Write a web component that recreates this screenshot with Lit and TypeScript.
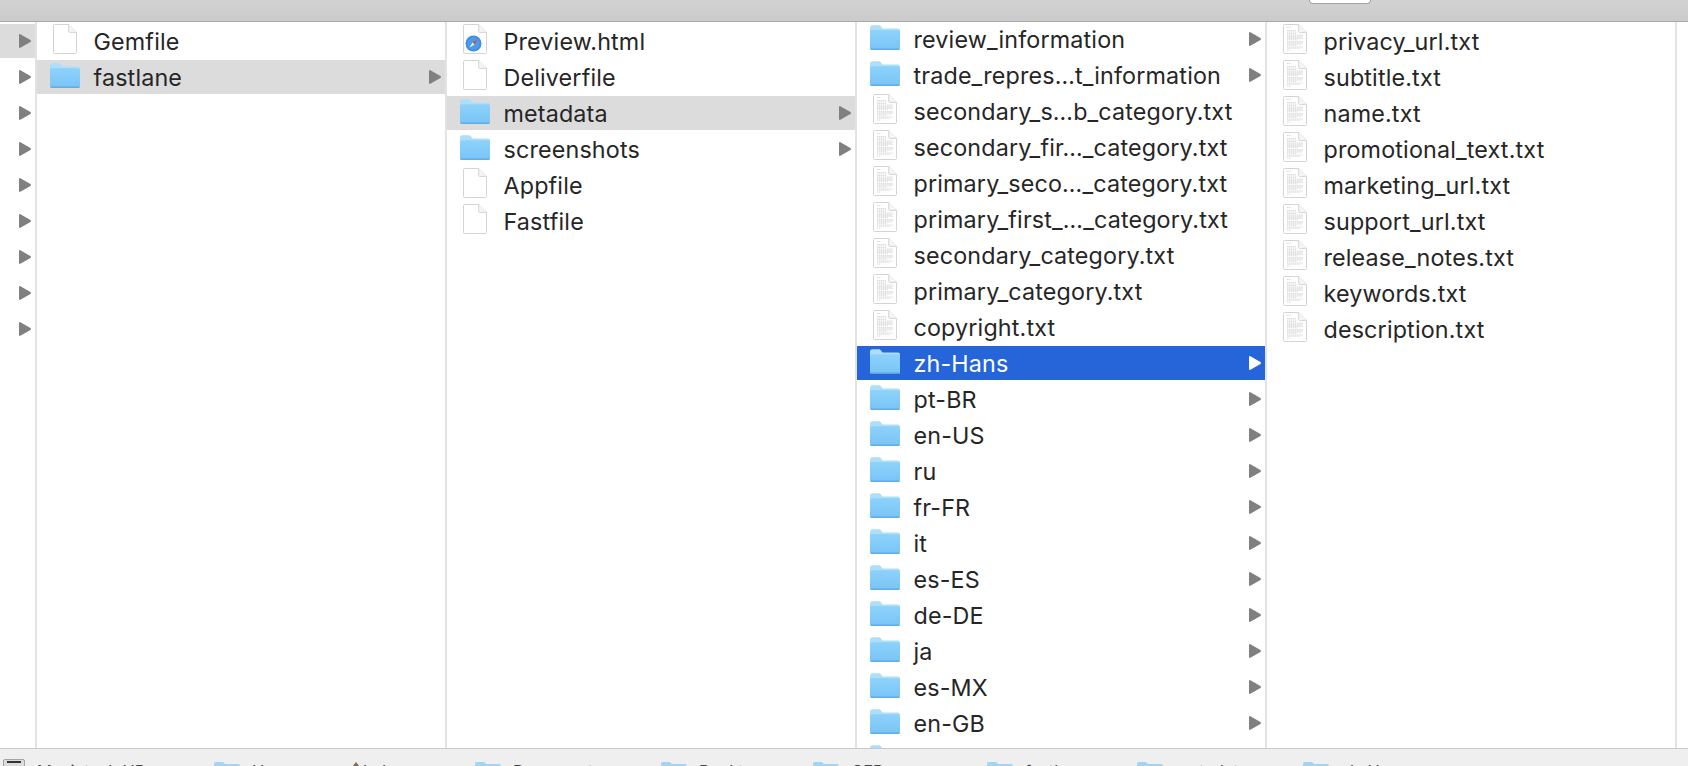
import { LitElement, html, css, svg } from "lit";
import { customElement } from "lit/decorators.js";

type Kind = "folder" | "file" | "doc" | "html";
interface Row { name: string; kind: Kind; arrow?: boolean; state?: "grey" | "blue"; }

const folderIcon = (blue = false) => html`<svg class="ic folder" width="32" height="28" viewBox="0 0 32 26" preserveAspectRatio="none">
  <defs><linearGradient id="fg" x1="0" y1="0" x2="0" y2="1"><stop offset="0" stop-color="#8ed2fa"/><stop offset="1" stop-color="#78c4f7"/></linearGradient></defs>
  <path d="M1 4.5C1 3 2 2 3.2 2h6.6c1 0 1.5.4 2.2 1.2L13.6 5H29c1.2 0 2 .8 2 2v16c0 1.2-.8 2-2 2H3c-1.2 0-2-.8-2-2z" fill="#addefb"/>
  <path d="M1 8.2c0-.9.7-1.5 1.6-1.5h26.8c.9 0 1.6.6 1.6 1.5V23c0 1.2-.8 2-2 2H3c-1.2 0-2-.8-2-2z" fill="url(#fg)"/>
  <path d="M1.5 24.3h29" stroke="${blue ? "#4f9ede" : "#5fa8dd"}" stroke-width="1.2"/>
</svg>`;

const pageOutline = svg`<path d="M1.5 2.5c0-.6.4-1 1-1h14.2L24.5 9.4V29.5c0 .6-.4 1-1 1h-21c-.6 0-1-.4-1-1z" fill="#fff" stroke="#d4d4d4"/>
  <path d="M16.7 1.5v7c0 .5.4.9.9.9h6.9" fill="#f6f6f6" stroke="#d4d4d4"/>`;

const fileIcon = () => html`<svg class="ic page" width="26" height="32" viewBox="0 0 26 32">${pageOutline}</svg>`;

const docLines: [number, number][] = [
  [4.5, 9], [7.5, 14], [9, 15], [10.5, 14], [12, 21], [13.2, 21], [14.4, 20], [15.6, 21], [16.8, 16],
  [18.6, 21], [19.8, 21], [21, 20], [22.2, 15], [24, 21], [25.2, 18], [27, 9],
];
const docIcon = () => html`<svg class="ic page" width="26" height="32" viewBox="0 0 26 32">${pageOutline}
  ${docLines.map(([y, x2]) => svg`<line x1="5" x2="${x2}" y1="${y}" y2="${y}" stroke="#c4c4c4" stroke-width="0.6" stroke-dasharray="1.4 .5"/>`)}
</svg>`;

const htmlIcon = () => html`<svg class="ic page" width="26" height="32" viewBox="0 0 26 32">${pageOutline}
  <circle cx="11.5" cy="20.5" r="8" fill="#3f8fe0"/><circle cx="11.5" cy="20.5" r="6.2" fill="#4a9cec"/>
  <path d="M15.5 16.5l-3 5-2-2z" fill="#e0453a"/><path d="M7.5 24.5l3-5 2 2z" fill="#f3f3f3"/>
</svg>`;

const icon = (r: Row) =>
  r.kind === "folder" ? folderIcon(r.state === "blue") :
  r.kind === "doc" ? docIcon() : r.kind === "html" ? htmlIcon() : fileIcon();

const f = (name: string, state?: "grey" | "blue"): Row => ({ name, kind: "folder", arrow: true, state });
const d = (name: string): Row => ({ name, kind: "doc" });

const col2: Row[] = [{ name: "Gemfile", kind: "file" }, f("fastlane", "grey")];
const col3: Row[] = [
  { name: "Preview.html", kind: "html" }, { name: "Deliverfile", kind: "file" },
  f("metadata", "grey"), f("screenshots"),
  { name: "Appfile", kind: "file" }, { name: "Fastfile", kind: "file" },
];
const col4: Row[] = [
  f("review_information"), f("trade_repres…t_information"),
  d("secondary_s…b_category.txt"), d("secondary_fir…_category.txt"),
  d("primary_seco…_category.txt"), d("primary_first_…_category.txt"),
  d("secondary_category.txt"), d("primary_category.txt"), d("copyright.txt"),
  f("zh-Hans", "blue"), f("pt-BR"), f("en-US"), f("ru"), f("fr-FR"), f("it"),
  f("es-ES"), f("de-DE"), f("ja"), f("es-MX"), f("en-GB"), { name: "", kind: "folder" },
];
const col5: Row[] = ["privacy_url", "subtitle", "name", "promotional_text", "marketing_url", "support_url", "release_notes", "keywords", "description"].map((n) => d(n + ".txt"));

const crumbs: { name: string; w: number; kind: "disk" | "home" | "folder" }[] = [
  { name: "Macintosh HD", w: 214, kind: "disk" },
  { name: "Users", w: 135, kind: "folder" },
  { name: "lydev", w: 126, kind: "home" },
  { name: "Documents", w: 186, kind: "folder" },
  { name: "Desktop", w: 152, kind: "folder" },
  { name: "GFD", w: 174, kind: "folder" },
  { name: "fastlane", w: 150, kind: "folder" },
  { name: "metadata", w: 166, kind: "folder" },
  { name: "zh-Hans", w: 200, kind: "folder" },
];

@customElement("app-root")
export class AppRoot extends LitElement {
  static styles = css`
    :host { display: block; width: 100%; height: 766px; overflow: hidden; background: #fff;
      font-family: "Inter", "Liberation Sans", sans-serif; color: #262626; }
    .window { display: flex; flex-direction: column; height: 766px; }
    .toolbar { flex: 0 0 21px; background: linear-gradient(#d2d2d2, #cbcbcb); border-bottom: 1px solid #a9a9a9;
      display: flex; justify-content: flex-end; padding-right: 317px; align-items: flex-start; }
    .pill { width: 60px; height: 3px; background: #fff; border: 1px solid #a2a2a2; border-top: 0; border-radius: 0 0 5px 5px; }
    .browser { flex: 1; display: flex; min-height: 0; overflow: hidden; }
    .col { flex: 0 0 408px; border-right: 2px solid #e3e3e3; padding-top: 2px; overflow: hidden; }
    .col.scrolled { padding-top: 0; }
    .col.first { flex: 0 0 35px; }
    .col.last { flex: 1; border-right: 0; }
    .row { height: 34px; margin-bottom: 2px; display: flex; align-items: center; position: relative; }
    .row.grey { background: #dcdcdc; }
    .row.blue { background: #2565d9; color: #fff; }
    .slot { box-sizing: border-box; flex: 0 0 56.5px; display: flex; align-items: center; }
    .slot.folder { padding-left: 12px; }
    .slot.page { padding-left: 15px; }
    .ic { display: block; flex: none; }
    .ic.folder { margin-bottom: 4px; }
    .ic.page { margin-bottom: 4px; }
    .name { flex: 1; font-size: 23.3px; white-space: nowrap; letter-spacing: 0.16px; }
    .arrow { flex: none; width: 12px; height: 14px; margin-right: 4px; }
    .col.first .row { justify-content: flex-end; }
    .pathbar { flex: 0 0 17px; background: #efefef; border-top: 1px solid #c9c9c9; display: flex; overflow: hidden; }
    .crumb { box-sizing: border-box; display: flex; align-items: flex-start; flex: none; padding-top: 13px; gap: 12px; font-size: 16.5px; line-height: 20px; color: #444; white-space: nowrap; }
    .crumb svg { display: block; flex: none; }
    .crumb .label { margin-top: -1px; }
    .crumb svg.home { margin-right: -12px; }
    .disk { width: 22px; height: 14px; margin: -3px 0 0 3px; background: #dcdcdc; border: 1px solid #a5a5a5; border-radius: 2px; box-sizing: border-box; position: relative; flex: none; }
    .disk::after { content: ""; position: absolute; left: 3px; right: 3px; top: 1px; height: 2px; background: #333; }
  `;

  private arrow(blue: boolean) {
    return html`<svg class="arrow" viewBox="0 0 12 14"><path d="M0 1c0-.8.7-1.2 1.4-.8L11.4 6.1c.8.5.8 1.3 0 1.8L1.4 13.8C.7 14.2 0 13.8 0 13z" fill="${blue ? "#fff" : "#808080"}"/></svg>`;
  }

  private rowTpl(r: Row) {
    return html`<div class="row ${r.state ?? ""}">
      <div class="slot ${r.kind === "folder" ? "folder" : "page"}">${icon(r)}</div>
      <div class="name">${r.name}</div>
      ${r.arrow ? this.arrow(r.state === "blue") : ""}
    </div>`;
  }

  private crumbIcon(kind: string) {
    if (kind === "disk") return html`<div class="disk"></div>`;
    if (kind === "home") return html`<svg class="home" width="14" height="12" viewBox="0 0 14 12"><path d="M7 0l4 5v7H3V5z" fill="#8a6d4e"/></svg>`;
    return html`<svg width="26" height="8" viewBox="0 0 26 8"><path d="M0 8V2C0 .8.8 0 2 0h6c1 0 1.5.4 2 1l1 1h13c1.2 0 2 .8 2 2v4z" fill="#9fd6f8"/></svg>`;
  }

  render() {
    return html`<div class="window">
      <div class="toolbar"><div class="pill"></div></div>
      <div class="browser">
        <div class="col first">
          ${Array.from({ length: 9 }, (_, i) => html`<div class="row ${i === 0 ? "grey" : ""}">${this.arrow(false)}</div>`)}
        </div>
        <div class="col">${col2.map((r) => this.rowTpl(r))}</div>
        <div class="col">${col3.map((r) => this.rowTpl(r))}</div>
        <div class="col scrolled">${col4.map((r) => this.rowTpl(r))}</div>
        <div class="col">${col5.map((r) => this.rowTpl(r))}</div>
        <div class="col last"></div>
      </div>
      <div class="pathbar">
        ${crumbs.map((c) => html`<div class="crumb" style="width:${c.w}px">${this.crumbIcon(c.kind)}<span class="label">${c.name}</span></div>`)}
      </div>
    </div>`;
  }
}
